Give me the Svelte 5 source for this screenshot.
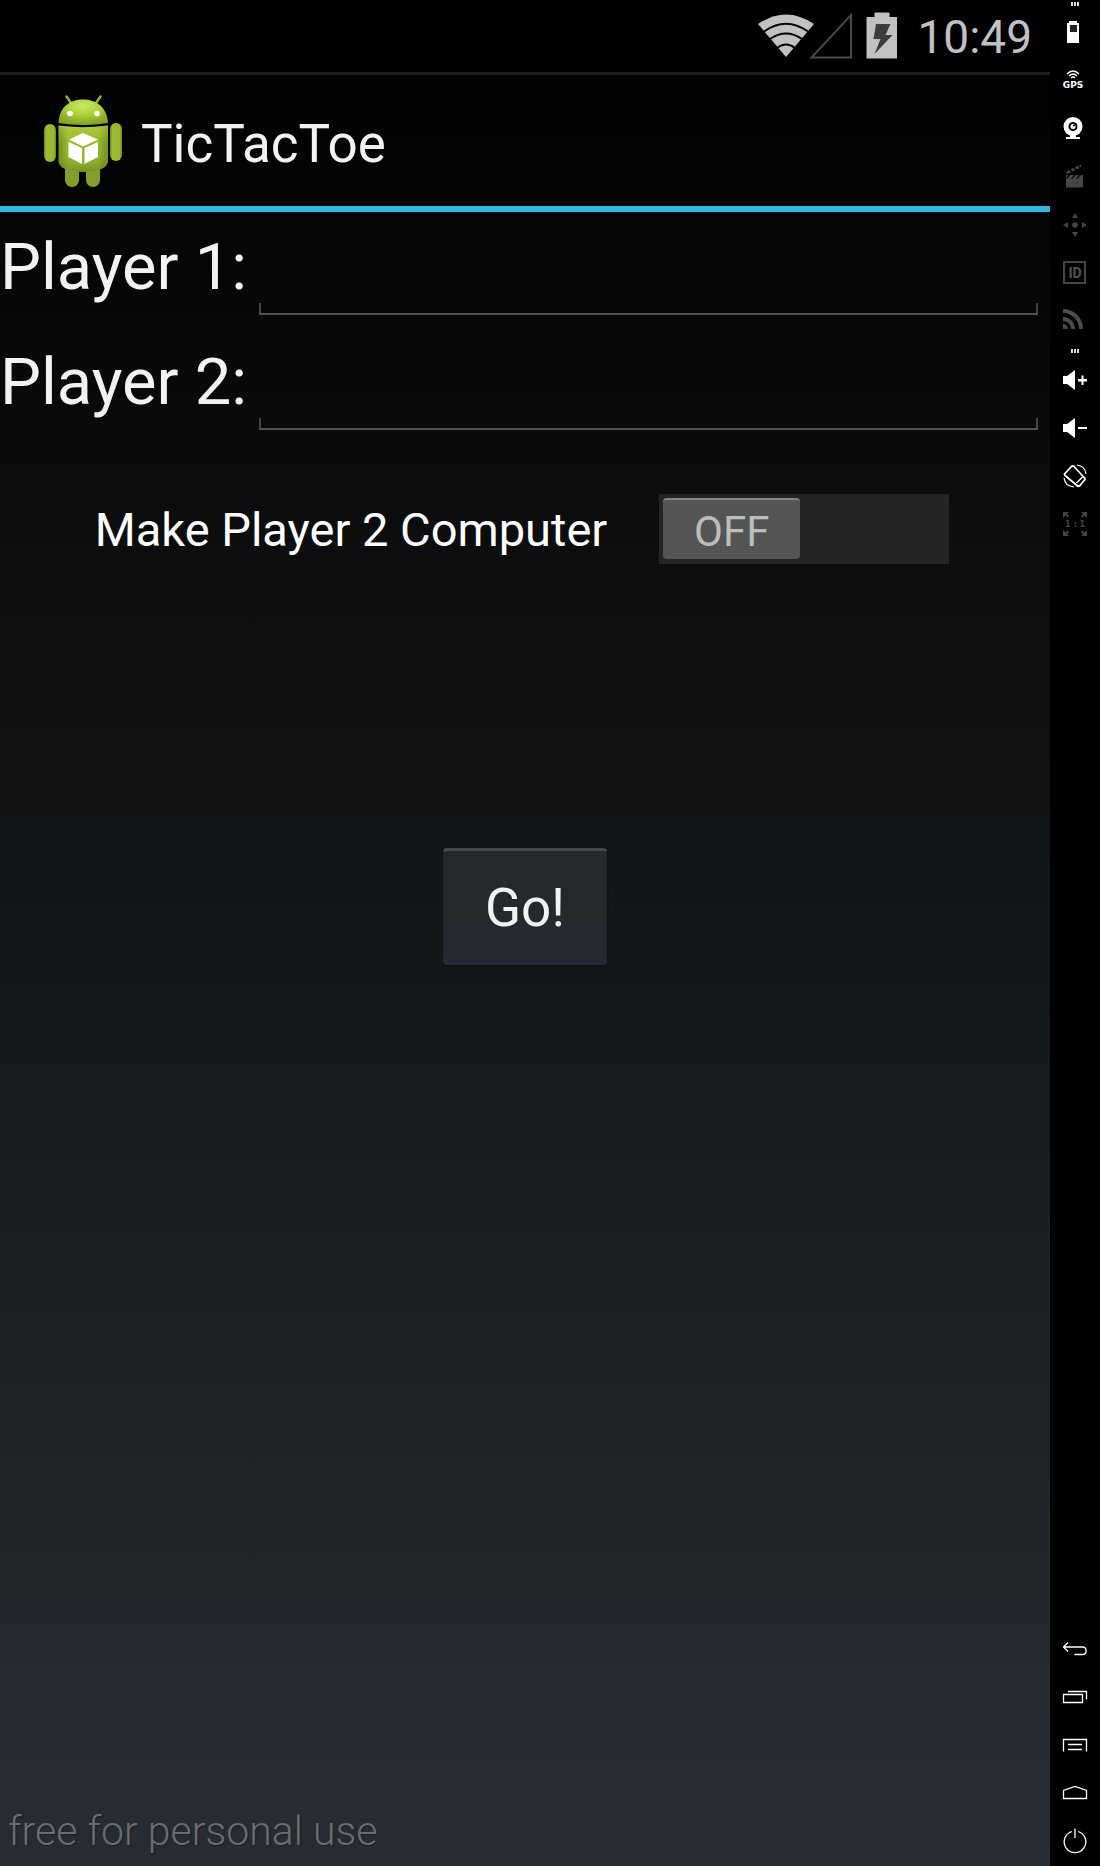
<script>
  let player1 = $state('');
  let player2 = $state('');
  let computer = $state(false);
</script>

<div class="emulator">
  <div class="screen">
    <div class="status">
      <svg class="wifi" viewBox="0 0 58 44" role="img" aria-label="Wi-Fi">
        <path d="M29 43 L1 10 Q29 -9 57 10 Z" fill="#c1c1c1" />
        <g fill="none" stroke="#000" stroke-width="2">
          <path d="M7 17.500 Q29 2 51 17.500" />
          <path d="M13 25 Q29 14 45 25" />
          <path d="M20 34 Q29 27 38 34" />
        </g>
      </svg>
      <svg class="signal" viewBox="0 0 44 48" role="img" aria-label="No signal">
        <path d="M2.500 45.500 H42 V3 Z" fill="none" stroke="#4a4a4a" stroke-width="2" />
      </svg>
      <svg class="charge" viewBox="0 0 32 48" role="img" aria-label="Charging">
        <path d="M0.500 5 H8.500 V0.500 H23.500 V5 H31 V46.500 H0.500 Z" fill="#c1c1c1" />
        <path d="M10 12 H24.500 L19.500 23 H26.500 L8.500 42 L14.500 27 H7.500 Z" fill="#3c3c3c" />
      </svg>
      <time>10:49</time>
    </div>

    <header>
      <svg class="logo" viewBox="0 0 80 92" aria-hidden="true">
        <defs>
          <linearGradient id="body" x1="0" x2="1">
            <stop offset="0" stop-color="#6f8a22" />
            <stop offset="0.200" stop-color="#9cba32" />
            <stop offset="0.800" stop-color="#98b62f" />
            <stop offset="1" stop-color="#718b25" />
          </linearGradient>
          <radialGradient id="head" cx="0.500" cy="0.250" r="0.700">
            <stop offset="0" stop-color="#cfe868" />
            <stop offset="0.500" stop-color="#abd035" />
            <stop offset="1" stop-color="#86a62a" />
          </radialGradient>
          <linearGradient id="shade" x1="0" x2="0" y1="0" y2="1">
            <stop offset="0" stop-color="#c6e04c" stop-opacity="0.500" />
            <stop offset="0.500" stop-color="#a0c030" stop-opacity="0" />
            <stop offset="1" stop-color="#50681a" stop-opacity="0.500" />
          </linearGradient>
        </defs>
        <path d="M23.500 1.500 L28 8 M57.500 1.500 L53 8" stroke="#91b02d" stroke-width="2.500" stroke-linecap="round" />
        <path d="M22 72 h14 v13 a7 7 0 0 1 -14 0 z M43 72 h14 v13 a7 7 0 0 1 -14 0 z" fill="#839f2b" />
        <rect x="1" y="29" width="12" height="38" rx="6" fill="url(#body)" />
        <rect x="67" y="28" width="12" height="38" rx="6" fill="url(#body)" />
        <path d="M15.500 28 C16 12 27 4.500 40 4.500 S64 12 65 28 Q40 32 15.500 28 Z" fill="url(#head)" />
        <path d="M15.500 30.500 Q40 34 65 30.500 V66 Q65 76 40 77 Q15.500 76 15.500 66 Z" fill="url(#body)" />
        <path d="M15.500 30.500 Q40 34 65 30.500 V66 Q65 76 40 77 Q15.500 76 15.500 66 Z" fill="url(#shade)" />
        <circle cx="27" cy="18.500" r="2.800" fill="#fff" />
        <circle cx="54" cy="18.500" r="2.800" fill="#fff" />
        <path d="M40 38 L55 44.500 L40 51.500 L26 44.500 Z M25.500 47 L39 53 V69 L25.500 62 Z M41.500 53 L55 47 V62 L41.500 69 Z" fill="#fff" />
      </svg>
      <h1>TicTacToe</h1>
    </header>

    <main>
      <div class="field">
        <label for="p1">Player 1:</label>
        <span class="edit"><input id="p1" type="text" bind:value={player1} /></span>
      </div>
      <div class="field">
        <label for="p2">Player 2:</label>
        <span class="edit"><input id="p2" type="text" bind:value={player2} /></span>
      </div>
      <label class="option">
        <span class="caption">Make Player 2 Computer</span>
        <input type="checkbox" role="switch" bind:checked={computer} />
        <span class="track" class:on={computer} aria-hidden="true">
          <span class="thumb">{computer ? 'ON' : 'OFF'}</span>
        </span>
      </label>
      <button class="go" type="button">Go!</button>
    </main>

    <footer>free for personal use</footer>
  </div>

  <aside>
    <div class="dots top"><i></i><i></i><i></i></div>
    <button type="button" aria-label="Battery">
      <svg viewBox="0 0 50 48"><path d="M19 13 h8 v2 h2 v20 h-12 v-20 h2 z" fill="#fff" /><path d="M20 17 h7 v7 h-7z" fill="#222" /></svg>
    </button>
    <button type="button" aria-label="GPS">
      <svg viewBox="0 0 50 48">
        <g fill="none" stroke="#fff" stroke-width="1.500"><path d="M17 18 Q23 12 29 18 M19 20 Q23 16 27 20 M21 22 Q23 20 25 22" /></g>
        <text x="23" y="32" text-anchor="middle" class="gps">GPS</text>
      </svg>
    </button>
    <button type="button" aria-label="Camera">
      <svg viewBox="0 0 50 48">
        <circle cx="23" cy="22.500" r="9.500" fill="#fff" /><circle cx="23" cy="22.500" r="4.500" fill="#000" />
        <circle cx="23" cy="22.500" r="2.500" fill="#fff" /><circle cx="24" cy="21.500" r="1" fill="#000" />
        <path d="M20 31 h6 v2 h4 v2 h-14 v-2 h4z" fill="#fff" />
      </svg>
    </button>
    <button type="button" aria-label="Screencast">
      <svg viewBox="0 0 50 48" fill="#454545">
        <path d="M16 23 h2 l-2 4z M20 23 h4 l-3 4 h-4z M26 23 h3 l-3 4 h-4z M31 23 h2 v4 h-6z M16 27 h17 v8.500 h-17z" />
        <path d="M16 20 l3 -2 l2 2 l-4 2.500z M20.500 17.500 l3 -1.500 l2 2 l-3 1.500z M25 15.500 l3 -2 l1.500 2.500 l-3 1.500z M29 13.500 l2 -1 l.5 2.500 l-1 .5z" />
      </svg>
    </button>
    <button type="button" aria-label="Move">
      <svg viewBox="0 0 50 48" fill="#454545"><circle cx="25" cy="25" r="2.800" /><path d="M25 13 l3 5 h-6z M25 37 l3 -5 h-6z M13 25 l5 -3 v6z M37 25 l-5 -3 v6z" /></svg>
    </button>
    <button type="button" aria-label="Identifiers">
      <svg viewBox="0 0 50 48"><rect x="14" y="14" width="21" height="21" fill="none" stroke="#454545" stroke-width="2" /><text x="25" y="30" text-anchor="middle" class="id">ID</text></svg>
    </button>
    <button type="button" aria-label="Network">
      <svg viewBox="0 0 50 48"><g fill="none" stroke="#4c4c4c" stroke-width="4"><path d="M13 15 a18 18 0 0 1 18 18 M13 23 a10 10 0 0 1 10 10" /></g><path d="M13 28 a5 5 0 0 1 5 5 h-5z" fill="#4c4c4c" /></svg>
    </button>
    <div class="dots"><i></i><i></i><i></i></div>
    <button type="button" aria-label="Volume up">
      <svg viewBox="0 0 50 48" fill="#fff"><path d="M13 20 h4 l8 -6 v20 l-8 -6 h-4z M28 23 h3.500 v-3.500 h2 v3.500 h3.500 v2.500 h-3.500 v3.500 h-2 v-3.500 h-3.500z" /></svg>
    </button>
    <button type="button" aria-label="Volume down">
      <svg viewBox="0 0 50 48" fill="#fff"><path d="M13 20 h4 l8 -6 v20 l-8 -6 h-4z M28 23 h9 v2 h-9z" /></svg>
    </button>
    <button type="button" aria-label="Rotate">
      <svg viewBox="0 0 50 48" fill="none" stroke="#fff">
        <path d="M14.500 22 L22 14 Q23 13.500 24 14.500 L34.500 26 Q35.500 27 34.500 28 L30 33.500 Q28.500 35 27 33.500 L15 23.500 Z" stroke-width="1.800" />
        <path d="M26.500 31 L32.500 25" stroke-width="1.500" />
        <path d="M27 13 Q35 14 36 22 M14 26 Q15 34 24 35" stroke-width="1.200" />
      </svg>
    </button>
    <button type="button" aria-label="Actual size">
      <svg viewBox="0 0 50 48">
        <path d="M13 12 h6 l-2 2 l2 2 l-1.500 1.500 l-2 -2 l-2.500 2.500z M37 12 h-6 l2 2 l-2 2 l1.500 1.500 l2 -2 l2.500 2.500z M13 36 h6 l-2 -2 l2 -2 l-1.500 -1.500 l-2 2 l-2.500 -2.500z M37 36 h-6 l2 -2 l-2 -2 l1.500 -1.500 l2 2 l2.500 -2.500z" fill="#454545" />
        <text x="25" y="27" text-anchor="middle" class="ratio">1 : 1</text>
      </svg>
    </button>
    <div class="space"></div>
    <button type="button" aria-label="Back">
      <svg viewBox="0 0 50 48" fill="none" stroke="#fff" stroke-width="1.300"><path d="M18 17.500 L13.500 22 L18 26.500 M13.500 22 H33 a3.800 3.800 0 0 1 0 7.500 H24.500" /></svg>
    </button>
    <button type="button" aria-label="Recent apps">
      <svg viewBox="0 0 50 48" fill="none" stroke="#fff" stroke-width="1.300"><path d="M13.500 21.500 H32.500 V29.500 H13.500 Z M18 18.500 H36.500 V26.500" /></svg>
    </button>
    <button type="button" aria-label="Menu">
      <svg viewBox="0 0 50 48" fill="none" stroke="#fff" stroke-width="1.300"><path d="M13.500 30.500 V18.500 H36.500 V30.500 M18 23.500 H32 M18 28.500 H32" /></svg>
    </button>
    <button type="button" aria-label="Home">
      <svg viewBox="0 0 50 48" fill="none" stroke="#fff" stroke-width="1.300"><path d="M13.500 29.500 V21.500 L25 17.500 L36.500 21.500 V29.500 Z" /></svg>
    </button>
    <button type="button" aria-label="Power">
      <svg viewBox="0 0 50 48" fill="none" stroke="#fff" stroke-width="1.300"><path d="M22 14.500 A10.800 10.800 0 1 0 28 14.500 M25 11.500 V21" /></svg>
    </button>
  </aside>
</div>

<style>
  :global(body) {
    margin: 0;
    background: #000;
  }
  .emulator {
    display: flex;
    min-height: 100vh;
    background: #000;
    color: #f2f2f2;
    font-family: Roboto, 'Noto Sans', sans-serif;
  }
  .screen {
    flex: 1;
    min-width: 0;
    display: flex;
    flex-direction: column;
    background: linear-gradient(#000 0%, #050607 13%, #090a0c 22%, #141719 50%, #212528 80%, #272b33 92%, #282c34 100%);
  }
  .status {
    display: flex;
    align-items: center;
    justify-content: flex-end;
    box-sizing: border-box;
    height: 75px;
    padding-right: 18px;
    border-bottom: 3px solid #1e1e1e;
    background: #000;
    color: #c1c1c1;
  }
  .wifi {
    width: 58px;
    height: 44px;
  }
  .signal {
    width: 44px;
    height: 48px;
    margin-left: -6px;
  }
  .charge {
    width: 32px;
    height: 48px;
    margin: 0 19px 0 13px;
  }
  time {
    padding-top: 2px;
    font-size: 46px;
    line-height: 56px;
  }
  header {
    display: flex;
    align-items: center;
    gap: 18px;
    box-sizing: border-box;
    height: 137px;
    padding-left: 43px;
    border-bottom: 6px solid #33b5e5;
  }
  .logo {
    width: 80px;
    height: 92px;
  }
  h1 {
    margin: 0;
    padding-top: 6px;
    font-size: 53px;
    line-height: 62px;
    font-weight: 400;
  }
  main {
    flex: 1;
    display: flex;
    flex-direction: column;
  }
  .field {
    display: flex;
    height: 115px;
  }
  .field label {
    font-size: 65px;
    line-height: 110px;
    white-space: nowrap;
  }
  .edit {
    position: relative;
    flex: 1;
    margin: 0 12px 12px 12px;
    border-bottom: 2px solid #505254;
  }
  .edit::after {
    content: '';
    position: absolute;
    inset: auto 0 0 0;
    height: 10px;
    border: solid #424446;
    border-width: 0 2px;
    box-sizing: border-box;
    pointer-events: none;
  }
  .edit input {
    box-sizing: border-box;
    width: 100%;
    height: 100%;
    padding: 0 12px;
    border: 0;
    outline: 0;
    background: none;
    color: inherit;
    font: inherit;
    font-size: 48px;
  }
  .option {
    position: relative;
    display: flex;
    align-items: center;
    align-self: center;
    gap: 52px;
    margin: 52px 6px 0 0;
    color: #fff;
  }
  .caption {
    padding-top: 2px;
    font-size: 47px;
    line-height: 66px;
  }
  .option input {
    position: absolute;
    opacity: 0;
  }
  .track {
    display: flex;
    box-sizing: border-box;
    width: 290px;
    height: 70px;
    padding: 4px;
    background: #242626;
  }
  .on {
    justify-content: flex-end;
  }
  .thumb {
    box-sizing: border-box;
    width: 137px;
    height: 61px;
    border-top: 2px solid #858787;
    border-radius: 4px;
    background: #545555;
    color: #bdbdbd;
    font-size: 42px;
    line-height: 64px;
    text-align: center;
  }
  .go {
    align-self: center;
    width: 164px;
    height: 117px;
    margin-top: 284px;
    padding: 0;
    border: 0;
    border-top: 3px solid #43494c;
    border-radius: 4px;
    background: linear-gradient(#24292c 50%, #252932 75%);
    box-shadow: 0 1px 2px #0a0c0d;
    color: #f2f2f2;
    font: inherit;
    font-size: 53px;
  }
  footer {
    padding: 0 8px 6px;
    color: #6a6d71;
    font-size: 41px;
    font-weight: 300;
    line-height: 58px;
    text-shadow: 1px 1px 1px #1c1f24;
  }
  aside {
    display: flex;
    flex-direction: column;
    width: 50px;
    padding-bottom: 1px;
  }
  aside button {
    display: block;
    width: 50px;
    height: 48px;
    padding: 0;
    border: 0;
    background: none;
  }
  aside svg {
    display: block;
    width: 50px;
    height: 48px;
  }
  .dots {
    display: flex;
    align-items: flex-end;
    justify-content: center;
    gap: 1px;
    box-sizing: border-box;
    height: 12px;
    padding-bottom: 3px;
  }
  .top {
    height: 8px;
    padding-bottom: 2px;
  }
  .dots i {
    width: 2px;
    height: 4px;
    background: #ddd;
  }
  .space {
    flex: 1;
  }
  .gps {
    fill: #fff;
    font: 700 9px 'DejaVu Sans', sans-serif;
  }
  .id {
    fill: #555;
    font: 700 14px Roboto, sans-serif;
  }
  .ratio {
    fill: #454545;
    font: 700 8px 'DejaVu Sans', sans-serif;
  }
</style>
